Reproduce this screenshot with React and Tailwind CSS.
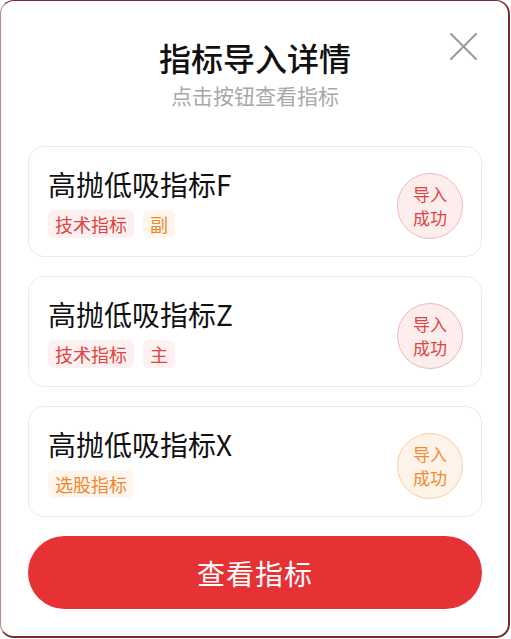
import React from 'react';

const indicators = [
  { name: '高抛低吸指标F', tags: [{ text: '技术指标', tone: 'red' }, { text: '副', tone: 'orange' }], tone: 'red' },
  { name: '高抛低吸指标Z', tags: [{ text: '技术指标', tone: 'red' }, { text: '主', tone: 'red' }], tone: 'red' },
  { name: '高抛低吸指标X', tags: [{ text: '选股指标', tone: 'orange' }], tone: 'orange' },
];

const tagStyles = {
  red: 'bg-[#fdf0f0] text-[#e0433f]',
  orange: 'bg-[#fef5ec] text-[#f0872e]',
};

const badgeStyles = {
  red: 'bg-[#fdeded] border-[#f0b9b9] text-[#e0433f]',
  orange: 'bg-[#fef3e8] border-[#f6cfa6] text-[#ef8a2e]',
};

const IndicatorCard = ({ item }) => (
  <div className="flex items-center justify-between h-[111px] rounded-[16px] border border-[#ebebeb] pl-[19px] pr-[18px]">
    <div className="flex flex-col">
      <div className="text-[28px] leading-[36px] text-[#111]">{item.name}</div>
      <div className="flex gap-[9px] mt-[8px]">
        {item.tags.map((t) => (
          <span
            key={t.text}
            className={`h-[28px] px-[7px] rounded-[6px] text-[18px] leading-[28px] ${tagStyles[t.tone]}`}
          >
            {t.text}
          </span>
        ))}
      </div>
    </div>
    <div
      className={`mt-2 w-[66px] h-[66px] rounded-full border flex flex-col items-center justify-center text-[17px] leading-[24px] ${badgeStyles[item.tone]}`}
    >
      <span>导入</span>
      <span>成功</span>
    </div>
  </div>
);

export default function App() {
  return (
    <div
      className="h-[639px] w-[511px] bg-white"
      style={{ fontFamily: '"Noto Sans CJK SC", "Noto Sans", sans-serif' }}
    >
      <div className="relative w-[510px] h-[638px] rounded-[14px] bg-white border border-[#7a2b2e] border-l-[#b68c8e] border-r-2 border-b-2 pl-[27px] pr-[26px] pt-[34px]">
        <button className="absolute right-[31px] top-[32px] w-[27px] h-[27px]">
          <svg width="27" height="27" viewBox="0 0 27 27">
            <path d="M1 1L26 26M26 1L1 26" stroke="#9a9a9a" strokeWidth="2" strokeLinecap="round" />
          </svg>
        </button>

        <h1 className="text-center text-[32px] leading-[44px] font-medium text-[#111]">指标导入详情</h1>
        <p className="text-center text-[21px] leading-[28px] text-[#a8a8a8] mt-[2px]">点击按钮查看指标</p>

        <div className="flex flex-col gap-[19px] mt-[37px]">
          {indicators.map((item) => (
            <IndicatorCard key={item.name} item={item} />
          ))}
        </div>

        <button className="mt-[19px] w-full h-[73px] rounded-full bg-[#e63234] text-white text-[28px] tracking-[1px]">
          查看指标
        </button>
      </div>
    </div>
  );
}
